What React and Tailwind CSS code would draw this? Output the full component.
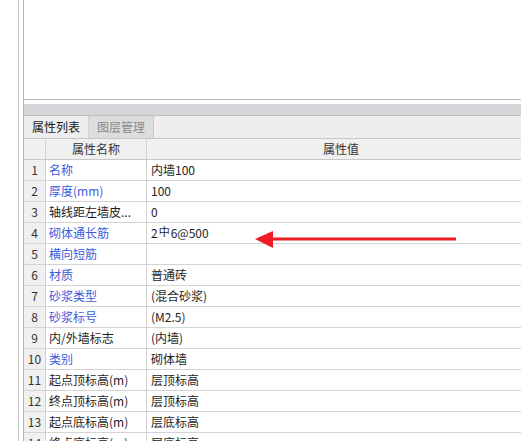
import React from "react";

const rows = [
  ["1", "名称", true, "内墙100"],
  ["2", "厚度(mm)", true, "100"],
  ["3", "轴线距左墙皮...", false, "0"],
  ["4", "砌体通长筋", true, "REBAR"],
  ["5", "横向短筋", true, ""],
  ["6", "材质", true, "普通砖"],
  ["7", "砂浆类型", true, "(混合砂浆)"],
  ["8", "砂浆标号", true, "(M2.5)"],
  ["9", "内/外墙标志", false, "(内墙)"],
  ["10", "类别", true, "砌体墙"],
  ["11", "起点顶标高(m)", false, "层顶标高"],
  ["12", "终点顶标高(m)", false, "层顶标高"],
  ["13", "起点底标高(m)", false, "层底标高"],
  ["14", "终点底标高(m)", false, "层底标高"],
];

export default function App() {
  return (
    <div
      className="relative flex w-[521px] h-[441px] overflow-hidden bg-white text-[12px] text-[#1e1e1e]"
      style={{ fontFamily: '"Noto Sans CJK SC", "Noto Sans", sans-serif' }}
    >
      <div className="w-[18px] shrink-0" />
      <div className="w-px shrink-0 bg-[#c4c4c4]" />
      <div className="w-[4px] shrink-0" />
      <div className="flex flex-col w-[520px] shrink-0 border-l border-[#b4b4b4]">
        <div className="h-[100px] shrink-0 border-b border-[#b4b4b4] bg-white" />
        <div className="h-[4px] shrink-0 bg-white" />
        <div className="h-[12px] shrink-0 bg-[#d4d5d9] border-b border-[#bfc0c4]" />
        <div className="flex h-[23px] shrink-0 bg-[#eeeeee] border-b border-[#c6c6c6]">
          <div className="flex items-center justify-center w-[65px] border-r border-[#d0d0d0] leading-none text-[#1a1a1a]">
            属性列表
          </div>
          <div className="flex items-center justify-center w-[65px] bg-[#dddddd] border-r border-[#c8c8c8] leading-none text-[#8a8a8a]">
            图层管理
          </div>
        </div>
        <div className="flex h-[21px] shrink-0 bg-[#f0f0f0] border-b border-[#c8c8c8]">
          <div className="w-[22px] shrink-0 border-r border-[#d0d0d0]" />
          <div className="flex items-center justify-center w-[101px] shrink-0 border-r border-[#d0d0d0] text-[#333]">
            属性名称
          </div>
          <div className="flex items-center justify-center w-[388px] shrink-0 text-[#333]">
            属性值
          </div>
        </div>
        {rows.map(([n, name, blue, val]) => (
          <div key={n} className="flex h-[21px] shrink-0 border-b border-[#d4d4d4]">
            <div className="flex items-center justify-center w-[22px] shrink-0 bg-[#f0f0f0] border-r border-[#d0d0d0] text-[#333]">
              {n}
            </div>
            <div
              className={
                "flex items-center w-[101px] shrink-0 border-r border-[#d0d0d0] pl-[3px] whitespace-nowrap " +
                (blue ? "text-[#3b5bdb]" : "text-[#1e1e1e]")
              }
            >
              {name}
            </div>
            <div className="flex items-center w-[388px] shrink-0 pl-[4px] bg-white">
              {val === "REBAR" ? (
                <span className="flex items-start">
                  2<span className="text-[11px] leading-none mt-[2px] mx-[1px]">中</span>6@500
                </span>
              ) : (
                val
              )}
            </div>
          </div>
        ))}
      </div>
      <svg
        className="absolute left-[254px] top-[230px]"
        width="204"
        height="19"
        viewBox="0 0 204 19"
      >
        <polygon points="1,9 19,1 19,18" fill="#ee1c25" />
        <rect x="18" y="7.5" width="184" height="3" fill="#ee1c25" />
      </svg>
    </div>
  );
}
